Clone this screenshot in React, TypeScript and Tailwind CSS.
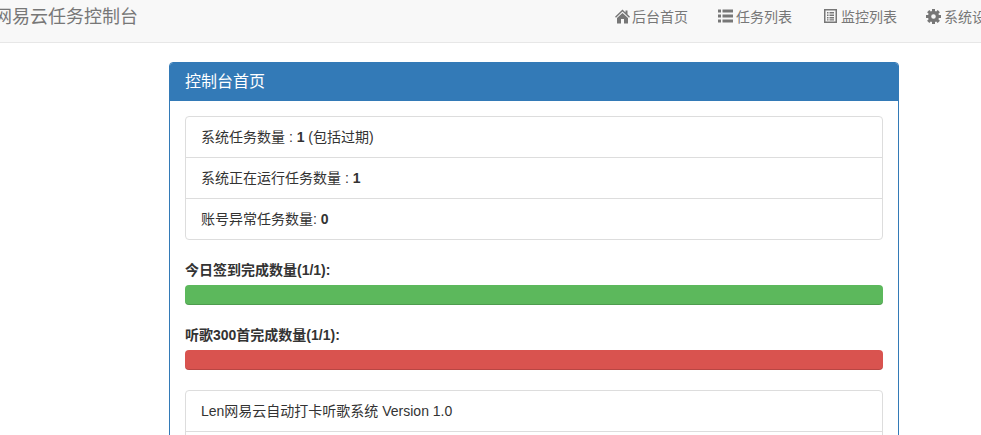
function HomeIcon() {
  return (
    <svg className="mt-[-2px]" width="15" height="15" viewBox="0 0 15 15" fill="currentColor">
      <path d="M7.5 0.5 L10.5 3.4 V1.5 H12.5 V5.3 L15 7.8 L14 8.8 L7.5 2.6 L1 8.8 L0 7.8 Z" />
      <path d="M7.5 4 L13 9 V14.5 H9 V10 H6 V14.5 H2 V9 Z" />
    </svg>
  );
}

function ThListIcon() {
  return (
    <svg className="mt-[-2px]" width="15" height="14" viewBox="0 0 15 14" fill="currentColor">
      <path d="M0 0.5H3V3.5H0ZM4.5 0.5H15V3.5H4.5ZM0 5.5H3V8.5H0ZM4.5 5.5H15V8.5H4.5ZM0 10.5H3V13.5H0ZM4.5 10.5H15V13.5H4.5Z" />
    </svg>
  );
}

function ListAltIcon() {
  return (
    <svg className="mt-[-2px]" width="13" height="14" viewBox="0 0 13 14" fill="currentColor">
      <path
        fillRule="evenodd"
        d="M0 0H13V14H0ZM1.5 1.5V12.5H11.5V1.5Z"
      />
      <path d="M3 3H4.5V4.5H3ZM5.5 3H10V4.5H5.5ZM3 5.5H4.5V7H3ZM5.5 5.5H10V7H5.5ZM3 8H4.5V9.5H3ZM5.5 8H10V9.5H5.5ZM3 10.2H4.5V11.5H3ZM5.5 10.2H10V11.5H5.5Z" />
    </svg>
  );
}

function CogIcon() {
  return (
    <svg className="mt-[-2px]" width="15" height="15" viewBox="0 0 15 15" fill="currentColor">
      <path
        fillRule="evenodd"
        d="M6 0H9V2.1L10.2 2.6L11.7 1.1L13.9 3.3L12.4 4.8L12.9 6H15V9H12.9L12.4 10.2L13.9 11.7L11.7 13.9L10.2 12.4L9 12.9V15H6V12.9L4.8 12.4L3.3 13.9L1.1 11.7L2.6 10.2L2.1 9H0V6H2.1L2.6 4.8L1.1 3.3L3.3 1.1L4.8 2.6L6 2.1ZM7.5 5.2A2.3 2.3 0 1 0 7.5 9.8A2.3 2.3 0 1 0 7.5 5.2Z"
      />
    </svg>
  );
}

const navItems = [
  { label: "后台首页", icon: <HomeIcon />, cls: "gap-[2px]" },
  { label: "任务列表", icon: <ThListIcon />, cls: "ml-[30px] gap-[3px]" },
  { label: "监控列表", icon: <ListAltIcon />, cls: "ml-[32px] gap-[4px]" },
  { label: "系统设置", icon: <CogIcon />, cls: "ml-[29px] gap-[3px]" },
];

function ListRow({ children }: { children: React.ReactNode }) {
  return (
    <li className="h-[41px] border-b border-[#ddd] px-[15px] pt-[10px] leading-5 last:h-[40px] last:border-b-0">
      {children}
    </li>
  );
}

function ProgressBlock({ label, color }: { label: string; color: string }) {
  return (
    <div className="mb-5">
      <div className="mb-[5px] font-bold leading-5">{label}</div>
      <div
        className={`h-5 rounded-[4px] shadow-[inset_0_-1px_0_rgba(0,0,0,0.15)] ${color}`}
      />
    </div>
  );
}

export default function App() {
  return (
    <div className="h-[435px] w-[981px] overflow-hidden bg-white font-['Liberation_Sans','Noto_Sans_CJK_SC',sans-serif] text-sm text-[#333]">
      <header className="flex h-[43px] items-start justify-between overflow-hidden border-b border-[#e7e7e7] bg-[#f8f8f8]">
        <div className="ml-[-6px] pt-[7px] text-lg leading-5 whitespace-nowrap text-[#777]">
          网易云任务控制台
        </div>
        <nav className="mr-[-19px] flex shrink-0 pt-[7px] leading-5 text-[#777]">
          {navItems.map((item) => (
            <a
              key={item.label}
              className={`flex items-center whitespace-nowrap ${item.cls}`}
            >
              {item.icon}
              {item.label}
            </a>
          ))}
        </nav>
      </header>

      <main className="mt-[19px] ml-[169px] w-[730px] rounded-[4px] border border-[#337ab7]">
        <div className="h-[38px] rounded-t-[3px] bg-[#337ab7] px-[15px] pt-[10px] text-base leading-[18px] text-white">
          控制台首页
        </div>
        <div className="p-[15px]">
          <ul className="mb-5 rounded-[4px] border border-[#ddd]">
            <ListRow>
              系统任务数量 : <b>1</b> (包括过期)
            </ListRow>
            <ListRow>
              系统正在运行任务数量 : <b>1</b>
            </ListRow>
            <ListRow>
              账号异常任务数量: <b>0</b>
            </ListRow>
          </ul>
          <ProgressBlock label="今日签到完成数量(1/1):" color="bg-[#5cb85c]" />
          <ProgressBlock label="听歌300首完成数量(1/1):" color="bg-[#d9534f]" />
          <ul className="rounded-[4px] border border-[#ddd]">
            <ListRow>Len网易云自动打卡听歌系统 Version 1.0</ListRow>
            <ListRow>&nbsp;</ListRow>
          </ul>
        </div>
      </main>
    </div>
  );
}
